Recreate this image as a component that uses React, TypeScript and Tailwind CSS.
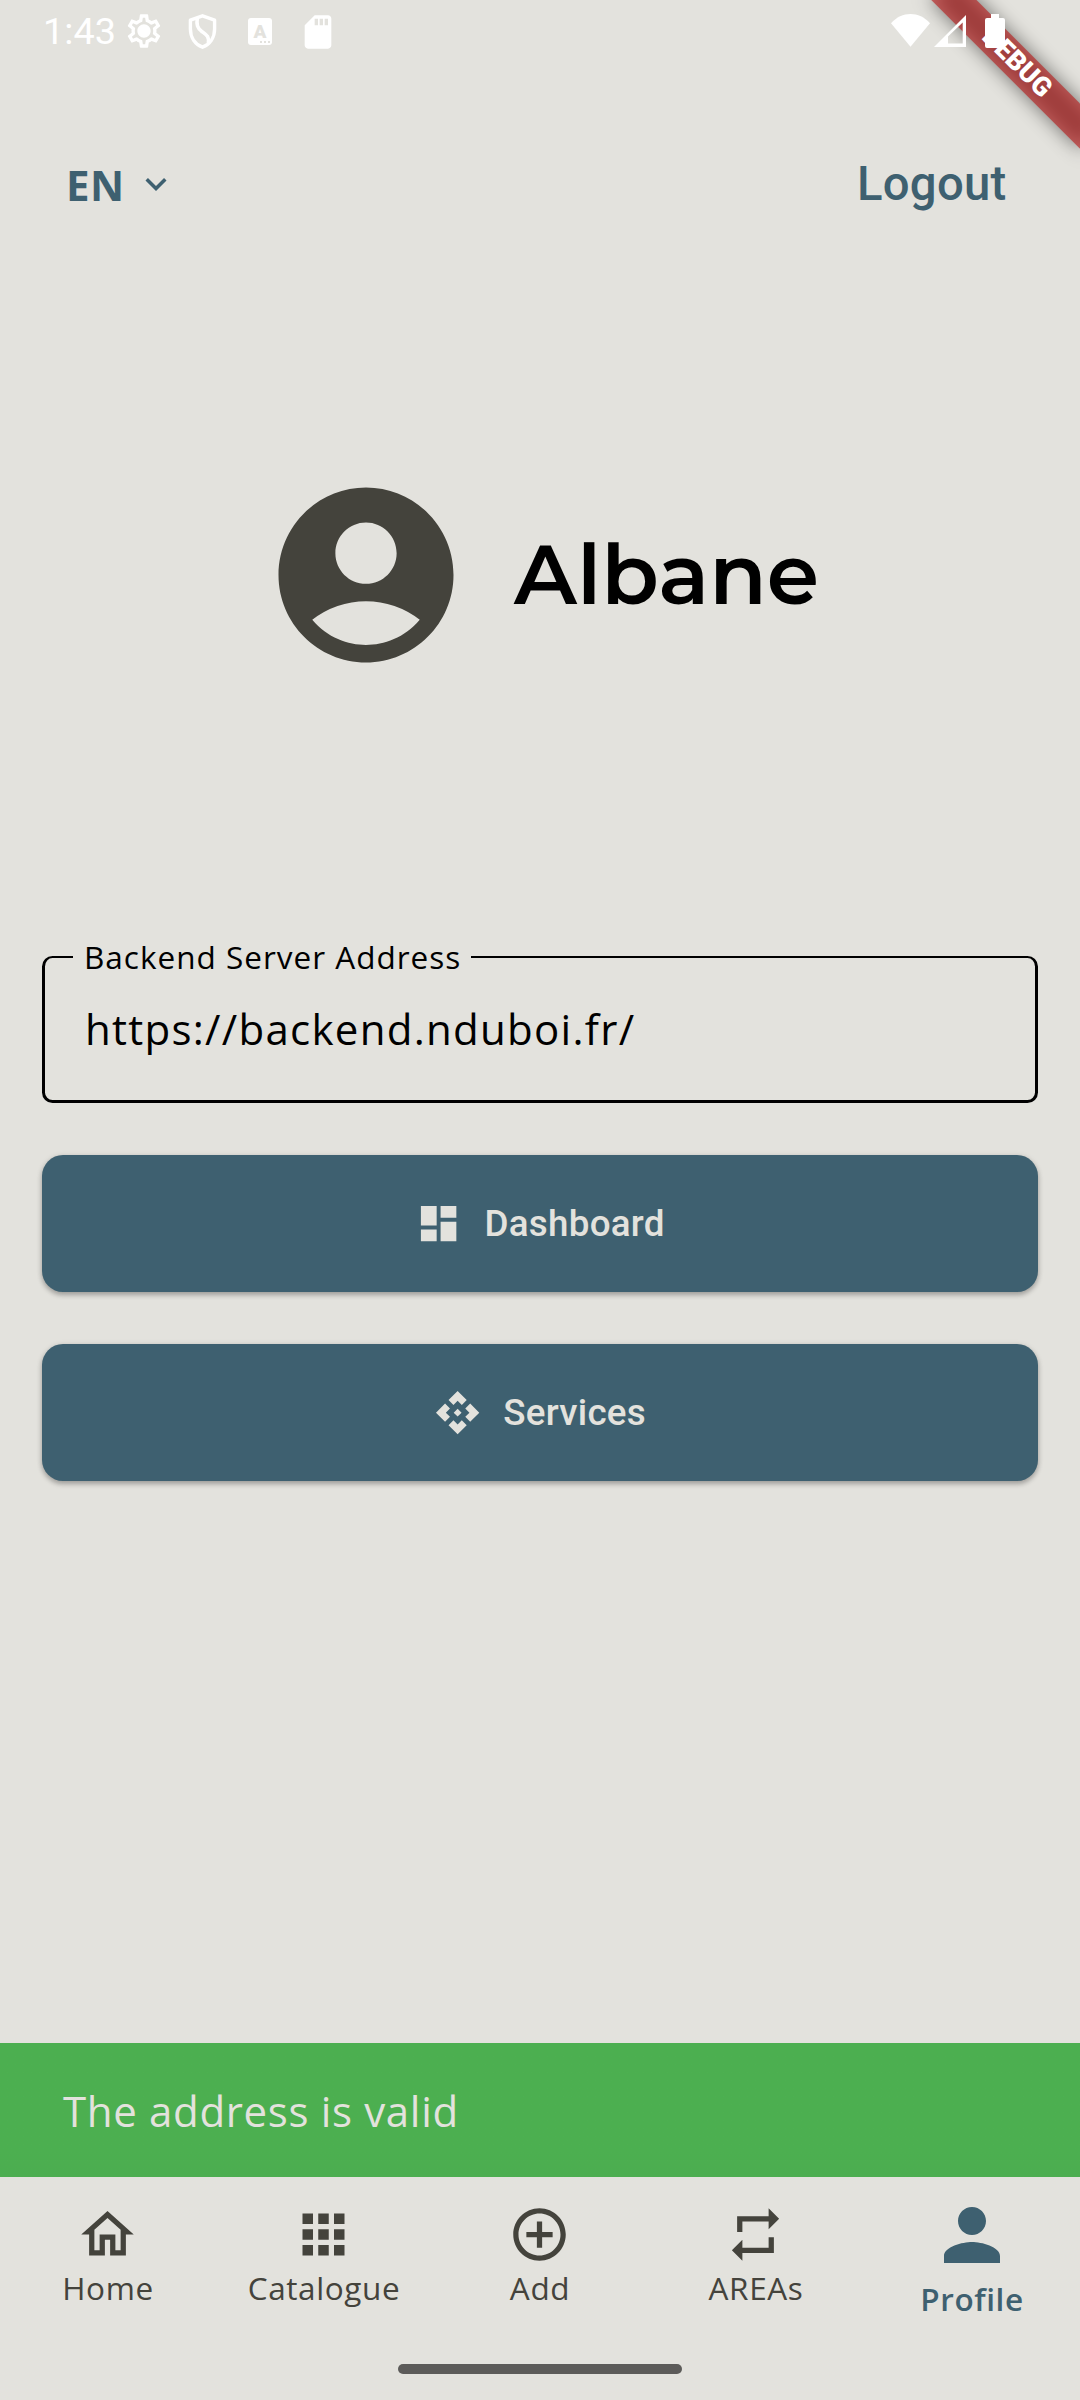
import React from 'react';
import {
  MdAccountCircle,
  MdApi,
  MdApps,
  MdControlPoint,
  MdDashboard,
  MdKeyboardArrowDown,
  MdOutlineHome,
  MdOutlineSettings,
  MdPerson,
  MdRepeat,
  MdSdCard,
} from 'react-icons/md';

function StatusBar() {
  return (
    <div className="relative z-10 flex h-[63px] items-start justify-between pl-[43px] pr-[75px] text-white">
      <div className="flex items-start">
        <span className="mt-[13px] w-[81px] font-[Roboto] text-[37.8px] leading-[37px]">1:43</span>
        <span className="relative mt-[11px] size-10">
          <MdOutlineSettings className="size-10" />
          <span className="absolute left-[14px] top-[14px] size-3 rounded-full bg-white" />
        </span>
        <svg className="ml-6 mt-[14px] h-[35px] w-[29px]" viewBox="0 0 29 35" fill="none" stroke="currentColor" strokeWidth="3.4" strokeLinejoin="round">
          <path d="M14.5 1.8 L2.4 6.2 V15 C2.4 23.5 7 30.3 14.5 33.2 C22 30.3 26.6 23.5 26.6 15 V6.2 Z" />
          <path d="M9.3 4 C8.3 11 9.5 14 13.5 17.2 C18.5 21 21.5 22.5 20.3 29" strokeWidth="3.6" />
        </svg>
        <span className="ml-[31px] mt-[18px] flex h-[27px] w-6 flex-col items-center rounded-[3px] bg-white text-[#e3e2dd]">
          <span className="mt-[5px] h-[16px] font-[Roboto] text-[19px] font-black leading-[17px]">A</span>
          <span className="mt-[2px] flex w-full justify-end gap-[2px] pr-[2px]">
            <i className="size-[2px] bg-[#e3e2dd]" />
            <i className="size-[2px] bg-[#e3e2dd]" />
            <i className="size-[2px] bg-[#e3e2dd]" />
          </span>
        </span>
        <MdSdCard className="ml-[26px] mt-[11.5px] size-10" />
      </div>
      <div className="flex items-start">
        <svg className="mt-[14px] h-[33px] w-[39px]" viewBox="0 0 39 33" fill="currentColor">
          <path d="M0 9.2 C11 -3 28 -3 39 9.2 L19.5 32.7 Z" />
        </svg>
        <svg className="ml-1 mt-[15px] h-8 w-8" viewBox="0 0 32 32" fill="currentColor">
          <path fillRule="evenodd" d="M0 32 L32 0 V32 Z M14 21.5 V28.5 H28.7 V7.5 Z" />
        </svg>
        <svg className="ml-[19px] mt-[14px] h-[34px] w-5" viewBox="0 0 20 34" fill="currentColor">
          <path d="M6 0 H14 V4 H18 Q20 4 20 6 V32 Q20 34 18 34 H2 Q0 34 0 32 V6 Q0 4 2 4 H6 Z" />
        </svg>
      </div>
    </div>
  );
}

function DebugBanner() {
  return (
    <div className="pointer-events-none absolute right-0 top-0 size-[210px] overflow-hidden">
      <div className="absolute left-[41.9px] top-[47.4px] h-[31.5px] w-[210px] rotate-45 bg-black/50 blur-[9.6px]" />
      <div className="absolute left-[41.9px] top-[47.4px] flex h-[31.5px] w-[210px] rotate-45 items-center justify-center bg-[#b71c1c]/63 font-[Roboto] text-[26.8px] font-black leading-none text-white">
        DEBUG
      </div>
    </div>
  );
}

function ActionButton({ icon, label }: { icon: React.ReactNode; label: string }) {
  return (
    <button className="flex h-[137px] w-full items-center justify-center gap-[22px] rounded-[21px] bg-[#3e6070] font-[Roboto] text-[36.75px] font-medium leading-[44px] tracking-[0.26px] text-[#e3e2dd] shadow-[0_3px_5px_rgba(0,0,0,0.25),0_1px_6px_rgba(0,0,0,0.1)]">
      {icon}
      <span>{label}</span>
    </button>
  );
}

function NavItem({ icon, label, active = false }: { icon: React.ReactNode; label: string; active?: boolean }) {
  return (
    <div
      className={
        active
          ? 'flex flex-col items-center gap-[6px] pt-4 font-semibold text-[#3e6070]'
          : 'flex flex-col items-center gap-[6px] pt-[26px] text-[#44433c]'
      }
    >
      <span className={active ? '' : 'pr-px'}>{icon}</span>
      <span className="text-[31.5px] leading-8 tracking-[0.6px]">{label}</span>
    </div>
  );
}

export default function App() {
  return (
    <div className="relative flex h-[2400px] w-[1080px] flex-col overflow-hidden bg-[#e3e2dd] font-['Open_Sans',sans-serif]">
      <DebugBanner />
      <StatusBar />

      <header className="mt-[91px] flex h-[60px] items-center justify-between pl-[66px] pr-[73.5px] text-[#3e6070]">
        <div className="flex items-center gap-[10px]">
          <span className="mt-px text-[42px] font-bold leading-[60px] tracking-[0.5px]">EN</span>
          <MdKeyboardArrowDown className="size-[42px]" />
        </div>
        <span className="font-[Roboto] text-[47.25px] font-medium leading-[60px] tracking-[0.26px]">Logout</span>
      </header>

      <section className="mt-[256px] flex h-[210px] items-center gap-[43px] pl-[261px]">
        <MdAccountCircle className="size-[210px] shrink-0 text-[#44433c]" />
        <h1 className="-mt-[2px] font-[Montserrat] text-[84px] font-semibold leading-[84px] text-black">Albane</h1>
      </section>

      <main className="mx-[42px] mt-[261px] flex flex-col">
        <fieldset className="h-[162px] rounded-[10.5px] border-[3px] border-t-2 border-black text-black">
          <legend className="ml-7 w-[398px] whitespace-nowrap pl-[11px] text-[31.5px] leading-8 tracking-[1px]">
            Backend Server Address
          </legend>
          <div className="pl-[40px] pt-7 text-[42px] leading-[56px] tracking-[1.28px]">https://backend.nduboi.fr/</div>
        </fieldset>
        <div className="mt-[52px] flex flex-col gap-[52px]">
          <ActionButton icon={<MdDashboard className="size-[47.25px]" />} label="Dashboard" />
          <ActionButton icon={<MdApi className="size-[47.25px]" />} label="Services" />
        </div>
      </main>

      <div className="mt-auto flex h-[134px] items-center bg-linear-to-b from-[#4caf50] from-80% to-[#4cad50] pl-[63px] pt-px text-[42px] leading-[56px] tracking-[0.66px] text-[#e3e2dd]">
        The address is valid
      </div>

      <nav className="flex h-[223px] flex-col justify-between">
        <div className="grid grid-cols-5">
          <NavItem icon={<MdOutlineHome className="size-[63px]" />} label="Home" />
          <NavItem icon={<MdApps className="size-[63px]" />} label="Catalogue" />
          <NavItem icon={<MdControlPoint className="size-[63px]" />} label="Add" />
          <NavItem icon={<MdRepeat className="size-[63px]" />} label="AREAs" />
          <NavItem active icon={<MdPerson className="size-[84px]" />} label="Profile" />
        </div>
        <div className="mx-auto mb-[26px] h-[10px] w-[284px] rounded-[5px] bg-[#5c5b59]" />
      </nav>
    </div>
  );
}
